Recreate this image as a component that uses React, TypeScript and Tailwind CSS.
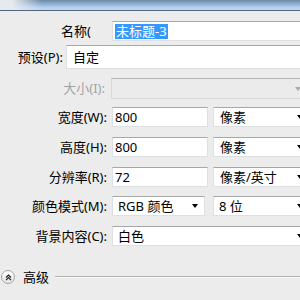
const Arrow = ({ muted = false }: { muted?: boolean }) => (
  <span
    className={
      muted
        ? "absolute right-[6px] top-1/2 -translate-y-1/2 w-0 h-0 border-l-[3.5px] border-r-[3.5px] border-t-[4px] border-l-transparent border-r-transparent border-t-[#a9a9a9]"
        : "absolute right-[6px] top-1/2 -translate-y-1/2 w-0 h-0 border-l-[3.5px] border-r-[3.5px] border-t-[4px] border-l-transparent border-r-transparent border-t-black"
    }
  />
)

const fieldCls =
  "relative shrink-0 h-full bg-white border border-[#dcdfe3] border-t-[#a7a7a7] flex items-center whitespace-nowrap"

const Label = ({ text }: { text: string }) => (
  <div className="w-[108px] shrink-0 text-right pr-[1px] whitespace-nowrap">{text}</div>
)

export default function App() {
  return (
    <div className="w-[300px] h-[300px] overflow-hidden bg-[#ececec] text-[13px] leading-none text-black font-['Noto_Sans','Noto_Sans_CJK_SC',sans-serif]">
      {/* title bar */}
      <div className="h-[11px] border-b border-[#52657a] bg-[linear-gradient(90deg,#e6eaee_0%,#e6eaee_4%,rgba(230,234,238,0)_14%),linear-gradient(180deg,#6e87a2_0%,#8fb0d3_40%,#b4d0ee_75%,#c3d9f0_100%)]" />

      {/* name */}
      <div className="mt-[10px] h-[20px] flex items-center">
        <div className="w-[112px] shrink-0 pl-[61px]">名称(</div>
        <div className={fieldCls + " w-[210px] pl-[2px]"}>
          <span className="inline-block h-[15px] leading-[15px] bg-[#3399ff] text-white pl-[1px] pr-[1px]">未标题-3</span>
        </div>
      </div>

      {/* preset */}
      <div className="mt-[4px] h-[24px] flex items-center">
        <div className="w-[63px] shrink-0 text-right whitespace-nowrap">预设(P):</div>
        <div className={fieldCls + " ml-[3px] w-[250px] pl-[6px]"}>自定</div>
      </div>

      {/* size (disabled) */}
      <div className="mt-[9px] h-[21px] flex items-center">
        <div className="w-[105px] shrink-0 text-right text-[#a3a3a3] whitespace-nowrap">大小(I):</div>
        <div className="relative shrink-0 ml-[6px] w-[197px] h-full bg-[#ebebeb] border border-[#d9d9d9] border-t-[#b4b4b4]">
          <Arrow muted />
        </div>
      </div>

      {/* width */}
      <div className="mt-[8px] h-[20px] flex items-center">
        <Label text="宽度(W):" />
        <div className={fieldCls + " ml-[4px] w-[96px] pl-[2px]"}>800</div>
        <div className={fieldCls + " ml-[5px] w-[97px] pl-[6px]"}>
          像素
          <Arrow />
        </div>
      </div>

      {/* height */}
      <div className="mt-[10px] h-[20px] flex items-center">
        <Label text="高度(H):" />
        <div className={fieldCls + " ml-[4px] w-[96px] pl-[2px]"}>800</div>
        <div className={fieldCls + " ml-[5px] w-[97px] pl-[6px]"}>
          像素
          <Arrow />
        </div>
      </div>

      {/* resolution */}
      <div className="mt-[10px] h-[20px] flex items-center">
        <Label text="分辨率(R):" />
        <div className={fieldCls + " ml-[4px] w-[96px] pl-[2px]"}>72</div>
        <div className={fieldCls + " ml-[5px] w-[97px] pl-[6px]"}>
          像素/英寸
          <Arrow />
        </div>
      </div>

      {/* color mode */}
      <div className="mt-[9px] h-[20px] flex items-center">
        <Label text="颜色模式(M):" />
        <div className={fieldCls + " ml-[4px] w-[93px] pl-[5px]"}>
          RGB 颜色
          <Arrow />
        </div>
        <div className={fieldCls + " ml-[8px] w-[97px] pl-[5px]"}>
          8 位
          <Arrow />
        </div>
      </div>

      {/* background */}
      <div className="mt-[10px] h-[20px] flex items-center">
        <Label text="背景内容(C):" />
        <div className={fieldCls + " ml-[4px] w-[198px] pl-[5px]"}>
          白色
          <Arrow />
        </div>
      </div>

      {/* advanced */}
      <div className="mt-[22px] h-[18px] flex items-center pl-[1px]">
        <div className="w-[14px] h-[14px] shrink-0 rounded-full border border-[#a5a5a5] bg-[linear-gradient(180deg,#ffffff,#e4e4e4)] flex items-center justify-center">
          <svg width="7" height="7" viewBox="0 0 7 7" fill="none" stroke="#222" strokeWidth="1.2">
            <path d="M1 3.5 L3.5 1 L6 3.5" />
            <path d="M1 6.2 L3.5 3.7 L6 6.2" />
          </svg>
        </div>
        <div className="ml-[8px]">高级</div>
        <div className="ml-[6px] flex-1 h-[2px] border-t border-[#b3b3b3] border-b border-b-[#f8f8f8]" />
      </div>
    </div>
  )
}
